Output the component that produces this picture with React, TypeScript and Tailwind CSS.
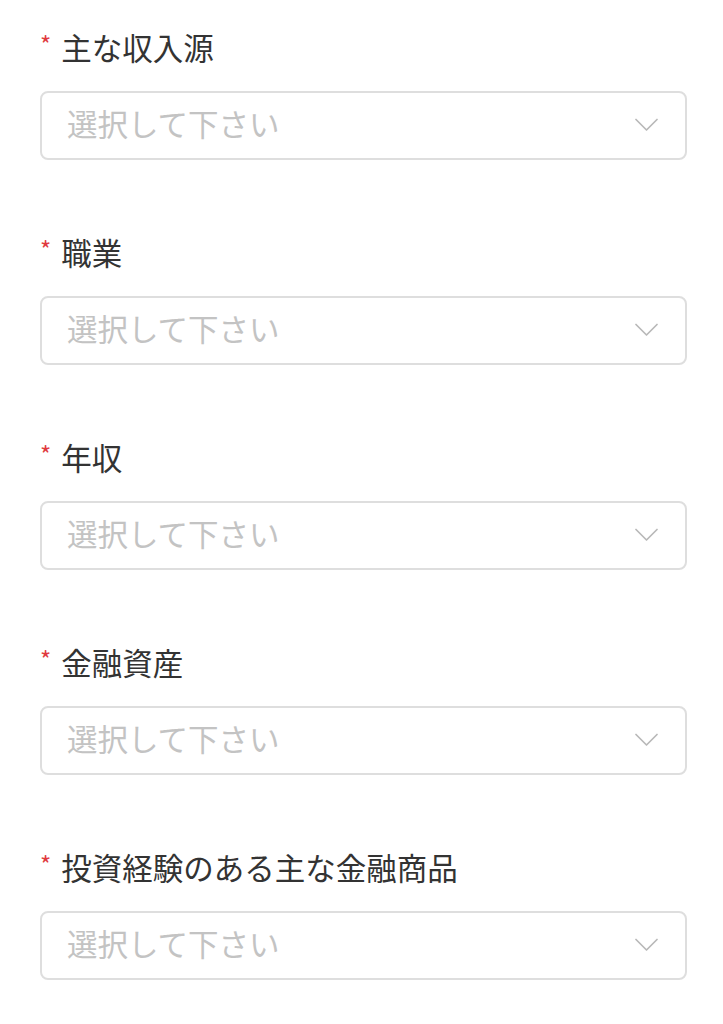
const fields = [
  "主な収入源",
  "職業",
  "年収",
  "金融資産",
  "投資経験のある主な金融商品",
];

function Chevron() {
  return (
    <svg width="23" height="14" viewBox="0 0 23 14" fill="none" className="shrink-0 -mt-[1px]">
      <path d="M1 1.5 L11.5 12 L22 1.5" stroke="#b9b9b9" strokeWidth="1.7" strokeLinecap="round" strokeLinejoin="round" />
    </svg>
  );
}

function SelectField({ label }: { label: string }) {
  return (
    <div className="flex flex-col">
      <div className="flex items-center h-[40px]">
        <span className="text-[#e0393e] text-[24px] leading-none mr-[10px] -mt-[6px]">*</span>
        <span className="text-[#333333] text-[30.5px] leading-[40px]">{label}</span>
      </div>
      <div className="mt-[24px] h-[69px] rounded-[8px] border-2 border-[#dedede] bg-white flex items-center justify-between pl-[25px] pr-[27px]">
        <span className="text-[#c3c3c3] text-[30.5px] leading-[40px] -mt-[5px]">選択して下さい</span>
        <Chevron />
      </div>
    </div>
  );
}

export default function App() {
  return (
    <div
      className="w-[723px] h-[1024px] bg-white pl-[40px] pr-[36px] pt-[27px] flex flex-col gap-[72px] overflow-hidden"
      style={{ fontFamily: '"Noto Sans CJK JP", "Noto Sans", sans-serif' }}
    >
      {fields.map((f) => (
        <SelectField key={f} label={f} />
      ))}
    </div>
  );
}
